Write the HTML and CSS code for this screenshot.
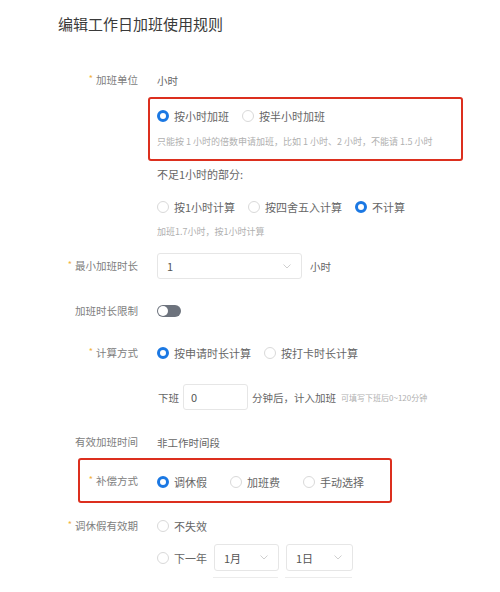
FILE: index.html
```html
<!DOCTYPE html>
<html lang="zh-CN">
<head>
<meta charset="utf-8">
<title>编辑工作日加班使用规则</title>
<link rel="stylesheet" href="styles.css">
</head>
<body>
<div class="page">
  <h1 class="title">编辑工作日加班使用规则</h1>

  <div class="row row-unit">
    <div class="label"><span class="req">*</span>加班单位</div>
    <div class="content value">小时</div>
  </div>

  <div class="box box-unit">
    <div class="radios">
      <div class="opt"><span class="radio on"></span>按小时加班</div>
      <div class="opt"><span class="radio"></span>按半小时加班</div>
    </div>
    <div class="hint hint-unit">只能按 1 小时的倍数申请加班，比如 1 小时、2 小时，不能请 1.5 小时</div>
  </div>

  <div class="indent subtitle">不足1小时的部分:</div>

  <div class="indent radios radios-part">
    <div class="opt"><span class="radio"></span>按1小时计算</div>
    <div class="opt"><span class="radio"></span>按四舍五入计算</div>
    <div class="opt"><span class="radio on"></span>不计算</div>
  </div>

  <div class="indent hint hint-part">加班1.7小时，按1小时计算</div>

  <div class="row row-min">
    <div class="label"><span class="req">*</span>最小加班时长</div>
    <div class="content">
      <div class="select select-wide"><span>1</span><svg class="chev" width="8" height="5" viewBox="0 0 8 5"><path d="M0.5 0.5 L4 4 L7.5 0.5" fill="none" stroke="#cfcfcf" stroke-width="1"/></svg></div>
      <span class="unit">小时</span>
    </div>
  </div>

  <div class="row row-limit">
    <div class="label">加班时长限制</div>
    <div class="content"><span class="toggle"></span></div>
  </div>

  <div class="row row-calc">
    <div class="label"><span class="req">*</span>计算方式</div>
    <div class="content radios">
      <div class="opt"><span class="radio on"></span>按申请时长计算</div>
      <div class="opt"><span class="radio"></span>按打卡时长计算</div>
    </div>
  </div>

  <div class="offwork">
    <span class="offwork-label">下班</span>
    <div class="input">0</div>
    <span class="offwork-text">分钟后，计入加班</span>
    <span class="offwork-hint">可填写下班后0~120分钟</span>
  </div>

  <div class="row row-valid">
    <div class="label">有效加班时间</div>
    <div class="content value">非工作时间段</div>
  </div>

  <div class="box box-comp">
    <div class="row">
      <div class="label label-short"><span class="req">*</span>补偿方式</div>
      <div class="content radios">
        <div class="opt opt-fixed"><span class="radio on"></span>调休假</div>
        <div class="opt opt-fixed"><span class="radio"></span>加班费</div>
        <div class="opt"><span class="radio"></span>手动选择</div>
      </div>
    </div>
  </div>

  <div class="row row-expire">
    <div class="label"><span class="req">*</span>调休假有效期</div>
    <div class="content radios">
      <div class="opt"><span class="radio"></span>不失效</div>
    </div>
  </div>

  <div class="indent next-year">
    <div class="opt"><span class="radio"></span>下一年</div>
    <div class="select select-month"><span>1月</span><svg class="chev" width="8" height="5" viewBox="0 0 8 5"><path d="M0.5 0.5 L4 4 L7.5 0.5" fill="none" stroke="#cfcfcf" stroke-width="1"/></svg></div>
    <div class="select select-day"><span>1日</span><svg class="chev" width="8" height="5" viewBox="0 0 8 5"><path d="M0.5 0.5 L4 4 L7.5 0.5" fill="none" stroke="#cfcfcf" stroke-width="1"/></svg></div>
  </div>

  <div class="more-selects">
    <div class="edge edge-month"></div>
    <div class="edge edge-day"></div>
  </div>
</div>
</body>
</html>
```

FILE: styles.css
```css
* { box-sizing: border-box; }

html, body {
  margin: 0;
  padding: 0;
}

body {
  width: 500px;
  height: 592px;
  overflow: hidden;
  background: #ffffff;
  font-family: "Noto Sans CJK SC", "Noto Sans", "Liberation Sans", sans-serif;
  color: #666;
}

.page {
  display: flex;
  flex-direction: column;
}

.title {
  margin: 0;
  padding: 14px 0 0 58px;
  font-size: 15px;
  line-height: 20px;
  font-weight: 400;
  color: #3a3a3a;
}

.row {
  display: flex;
  align-items: center;
  height: 20px;
}

.label {
  width: 138px;
  flex-shrink: 0;
  text-align: right;
  font-size: 10.5px;
  line-height: 20px;
  color: #808080;
  white-space: nowrap;
}

.label-short { width: 58px; }

.req {
  color: #f2b33d;
  font-size: 9px;
  margin-right: 3px;
  position: relative;
  top: -2px;
}

.content {
  margin-left: 19px;
  display: flex;
  align-items: center;
  font-size: 11px;
  color: #666;
}

.value {
  font-size: 10.5px;
  color: #666;
}

.indent { margin-left: 157px; }

.row-unit { margin-top: 36px; }

.box {
  border: 2px solid #dc2f1e;
  border-radius: 3px;
}

.box-unit {
  margin-top: 7px;
  margin-left: 148px;
  width: 315px;
  height: 64px;
  padding: 9px 0 0 7px;
}

.radios {
  display: flex;
  align-items: center;
  height: 16px;
}

.opt {
  display: flex;
  align-items: center;
  font-size: 11px;
  color: #666;
  white-space: nowrap;
  margin-right: 13px;
}

.opt-fixed { width: 73px; margin-right: 0; }

.radio {
  width: 12px;
  height: 12px;
  border-radius: 50%;
  border: 1px solid #d9d9d9;
  background: #fff;
  margin-right: 5px;
  flex-shrink: 0;
}

.radio.on {
  border: 3.5px solid #1b78e3;
}

.hint {
  font-size: 9px;
  line-height: 12px;
  height: 12px;
  color: #b0b0b0;
  white-space: nowrap;
}

.hint-unit { margin-top: 12px; }

.subtitle {
  margin-top: 5px;
  height: 16px;
  line-height: 16px;
  font-size: 11px;
  color: #666;
}

.radios-part { margin-top: 17px; }

.hint-part { margin-top: 11px; }

.row-min {
  margin-top: 15px;
  height: 26px;
}

.select {
  display: flex;
  align-items: center;
  justify-content: space-between;
  height: 26px;
  border: 1px solid #e6e6e6;
  border-radius: 3px;
  padding: 0 10px 0 9px;
  font-size: 11px;
  color: #555;
  background: #fff;
}

.select-wide { width: 145px; }

.chev { display: block; }

.unit {
  margin-left: 8px;
  font-size: 10.5px;
  color: #666;
}

.row-limit { margin-top: 22px; }

.toggle {
  position: relative;
  display: block;
  width: 24px;
  height: 12px;
  border-radius: 6px;
  background: #6d737d;
}

.toggle::before {
  content: "";
  position: absolute;
  left: 1px;
  top: 1px;
  width: 10px;
  height: 10px;
  border-radius: 50%;
  background: #fff;
}

.row-calc { margin-top: 22px; }

.offwork {
  margin-top: 21px;
  margin-left: 158px;
  display: flex;
  align-items: center;
  height: 26px;
}

.offwork-label {
  font-size: 10.5px;
  color: #666;
  margin-right: 4px;
}

.input {
  width: 65px;
  height: 26px;
  border: 1px solid #e6e6e6;
  border-radius: 3px;
  padding-left: 7px;
  display: flex;
  align-items: center;
  font-size: 11px;
  color: #555;
}

.offwork-text {
  margin-left: 4px;
  font-size: 10.5px;
  color: #666;
}

.offwork-hint {
  margin-left: 5px;
  font-size: 8px;
  color: #b0b0b0;
}

.row-valid { margin-top: 22px; }

.box-comp {
  margin-top: 6px;
  margin-left: 78px;
  width: 314px;
  height: 45px;
  display: flex;
  align-items: center;
  padding-top: 2px;
}

.row-expire { margin-top: 13px; }

.next-year {
  margin-top: 8px;
  display: flex;
  align-items: center;
  height: 27px;
}

.next-year .opt { margin-right: 7px; }

.select-month { width: 65px; height: 27px; }

.select-day { width: 67px; height: 27px; margin-left: 7px; }

.more-selects {
  margin-top: 6px;
  margin-left: 213px;
  display: flex;
  height: 15px;
}

.edge {
  height: 15px;
  border-top: 1px solid #ececec;
}

.edge-month { width: 65px; }

.edge-day { width: 67px; margin-left: 7px; }
```
